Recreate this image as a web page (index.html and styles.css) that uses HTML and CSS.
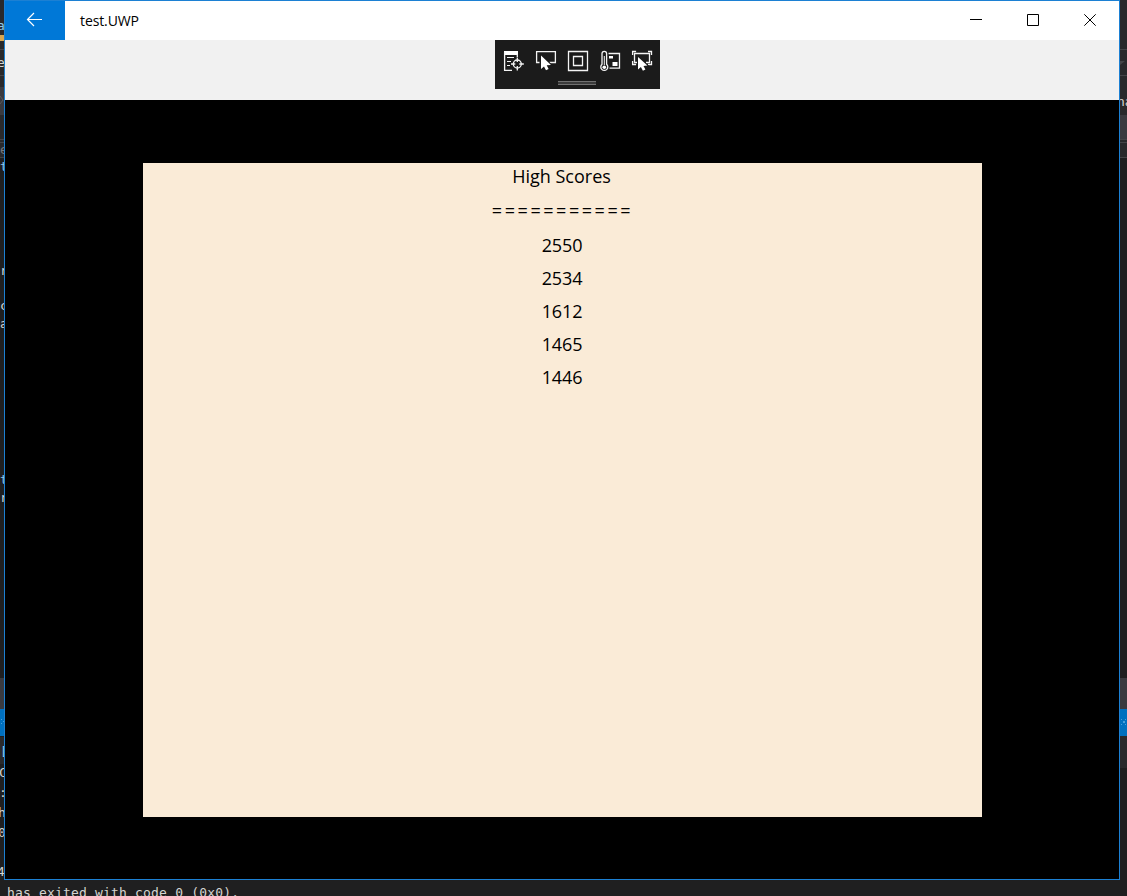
FILE: index.html
```
<!DOCTYPE html>
<html lang="en">
<head>
<meta charset="utf-8">
<title>test.UWP</title>
<link rel="stylesheet" href="styles.css">
</head>
<body>
<div class="desktop">
  <svg class="editor" width="1127" height="896" viewBox="0 0 1127 896" aria-hidden="true">
    <rect class="chrome" width="1127" height="158"/>
    <path class="tab" d="M0 87h4v28H0zM1120 115h7v25h-7z"/>
    <path class="rule" d="M0 49.5h4M0 75.5h4M0 139.5h4M0 142.5h4M0 157.5h4M1120 49.5h7M1120 75.5h7M1120 139.5h7M1120 142.5h7M1120 157.5h7M0 739.5h4M0 763.5h4"/>
    <path class="gold" d="M0 35h4v6H0z"/>
    <path class="mark" d="M0 96l3 4-3 4"/>
    <path class="arrow" d="M1120 61h5l-5 4z"/>
    <path class="panel" d="M0 678h4v31H0zM1120 678h7v31h-7z"/>
    <path class="active" d="M0 709h4v27H0zM1120 709h7v27h-7z"/>
    <path class="dots" d="M1 719h1v1H1zM3 721h1v1H3zM1 723h1v1H1zM1121 719h1v1h-1zM1125 719h1v1h-1zM1123 721h2v2h-2zM1121 724h1v1h-1zM1125 724h1v1h-1z"/>
    <path class="panel-low" d="M0 737h4v27H0zM1120 736h7v32h-7z"/>
    <g class="code">
      <text x="-3" y="30" class="blue">a</text>
      <text x="-3" y="67">e</text>
      <text x="0" y="154" class="dim">e</text>
      <text x="0" y="171" class="blue">t</text>
      <text x="0" y="275">r</text>
      <text x="0" y="310">c</text>
      <text x="0" y="328">a</text>
      <text x="0" y="484" class="blue">t</text>
      <text x="0" y="502">r</text>
      <text x="0" y="756" class="blue">[</text>
      <text x="-1" y="777">C</text>
      <text x="-1" y="797">:</text>
      <text x="-2" y="817">h</text>
      <text x="-2" y="837">0</text>
      <text x="-3" y="876">4</text>
      <text x="1117" y="106">na</text>
      <text x="7" y="897" class="output" textLength="232">has exited with code 0 (0x0).</text>
    </g>
  </svg>

  <main class="window">
    <header class="titlebar">
      <button class="back" aria-label="Back">
        <svg width="60" height="39" viewBox="0 0 60 39"><path d="M22.5 18.500H37M29 12l-6.500 6.500L29 25"/></svg>
      </button>
      <h1 class="title">test.UWP</h1>
      <nav class="controls">
        <svg width="57" height="39" viewBox="0 0 57 39"><path d="M22 18.5h12"/></svg>
        <svg width="57" height="39" viewBox="0 0 57 39"><path d="M22.5 13.5h11v11h-11z"/></svg>
        <svg width="57" height="39" viewBox="0 0 57 39"><path d="M22.3 13.3l11.4 11.4M33.7 13.3L22.3 24.7"/></svg>
      </nav>
    </header>
    <div class="band">
      <svg class="debugbar" width="165" height="49" viewBox="495 40 165 49">
        <path class="fill" d="M504 51h14v4h-14z"/>
        <path class="line bold" d="M504.600 52v18.400h7.400M517.300 54v3"/>
        <path class="line" d="M507 57.500h7M507 61.500h4M507 65.500h3"/>
        <circle class="line bold" cx="517.300" cy="64" r="4"/>
        <path class="line bold" d="M517.300 57.500v4.500M517.300 66v4.500M511 64h4.300M519.300 64h4.500"/>
        <path class="line bold" d="M539.500 62.500h-2.900V51.600h18.800v10.900h-5.900"/>
        <path class="cursor" d="M541 55.500V69l3-2.600 2 3.800 2.600-1.200-1.900-3.700 4.300-.3z"/>
        <path class="line bold" d="M568.500 51.500h19v19h-19zM573.500 56.500h9v9h-9z"/>
        <path class="line bold" d="M602 64.300V53.600a2.300 2.300 0 0 1 4.600 0v10.700a3.500 3.500 0 1 1-4.600 0z"/>
        <path class="line" d="M604.300 56v9"/>
        <circle class="fill" cx="604.300" cy="67.200" r="1.800"/>
        <path class="line bold" d="M608.500 53.500h11v14.700h-10"/>
        <path class="fill" d="M609 56h4v2.500h-4zM612.500 62h5v4h-5z"/>
        <path class="line bold" d="M632.600 55v-3.500h3.500M648 51.500h3.500V55M632.600 61v3.500h3.500M651.500 61v3.500H648"/>
        <path class="line bold" d="M637.500 62.500h-3v-9h15v9H646"/>
        <path class="cursor" d="M638 57v12.500l2.900-2.500 2 3.700 2.500-1.200-1.900-3.600 3.900-.3z"/>
        <path class="grip-base" d="M558 81h38v4h-38z"/>
        <path class="grip" d="M558 81.500h38M558 84.500h38"/>
      </svg>
    </div>
    <section class="stage">
      <div class="page">
        <p class="row heading">High Scores</p>
        <p class="row underline">===========</p>
        <p class="row">2550</p>
        <p class="row">2534</p>
        <p class="row">1612</p>
        <p class="row">1465</p>
        <p class="row">1446</p>
      </div>
    </section>
  </main>
</div>
</body>
</html>
```
FILE: styles.css
```
* { box-sizing: border-box; }

body {
  margin: 0;
  overflow: hidden;
  font-family: "Open Sans", "Noto Sans", sans-serif;
}

.desktop {
  position: relative;
  width: 1127px;
  height: 896px;
  overflow: hidden;
  background: #1f1f20;
}

.editor { display: block; }
.chrome { fill: #29292b; }
.tab, .panel { fill: #3a3a3f; }
.panel-low { fill: #2a2a2c; }
.active { fill: #0070bf; }
.dots { fill: #48a0dc; }
.gold { fill: #d6a650; }
.rule { stroke: #444447; }
.mark { fill: none; stroke: #59595c; }
.arrow { fill: #444447; }
.code {
  fill: #d4d4d0;
  font: 13px "DejaVu Sans Mono", monospace;
}
.code .blue { fill: #8cc8e8; }
.code .dim { fill: #77777a; }

/* Application window */
.window {
  position: absolute;
  left: 4px;
  top: 0;
  display: flex;
  flex-direction: column;
  width: 1116px;
  height: 880px;
  border: 1px solid #1c80d3;
  background: #000;
}

.titlebar {
  display: flex;
  height: 39px;
  background: #fff;
}
.back {
  width: 60px;
  height: 39px;
  padding: 0;
  border: 0;
  background: #0078d7;
}
.back svg { display: block; fill: none; stroke: #fff; stroke-width: 1.2; }
.title {
  flex: 1;
  margin: 0;
  padding-left: 15px;
  font-size: 14px;
  font-weight: 400;
  line-height: 39px;
  letter-spacing: -0.1px;
}
.controls { display: flex; }
.controls svg { fill: none; stroke: #000; }

.band {
  height: 60px;
  padding-left: 490px;
  background: #f1f1f1;
}
.debugbar { display: block; background: #1b1b1b; }
.line { fill: none; stroke: #f4f4f4; }
.bold { stroke-width: 1.3; }
.fill { fill: #fff; }
.cursor {
  fill: #fff;
  stroke: #1b1b1b;
  stroke-width: 2;
  paint-order: stroke;
}
.grip-base { fill: #3c3c3c; }
.grip { stroke: #717171; }

.stage {
  flex: 1;
  padding: 63px 137px 62px 138px;
  background: #000;
}
.page {
  height: 654px;
  background: #faebd7;
  text-align: center;
}
.row {
  margin: 0;
  height: 33px;
  padding-right: 1px;
  font-size: 18px;
  line-height: 26px;
  letter-spacing: -0.15px;
}
.heading { height: 34px; padding-right: 2px; letter-spacing: 0; }
.underline { height: 35px; padding-right: 0; letter-spacing: 2.55px; }
```
